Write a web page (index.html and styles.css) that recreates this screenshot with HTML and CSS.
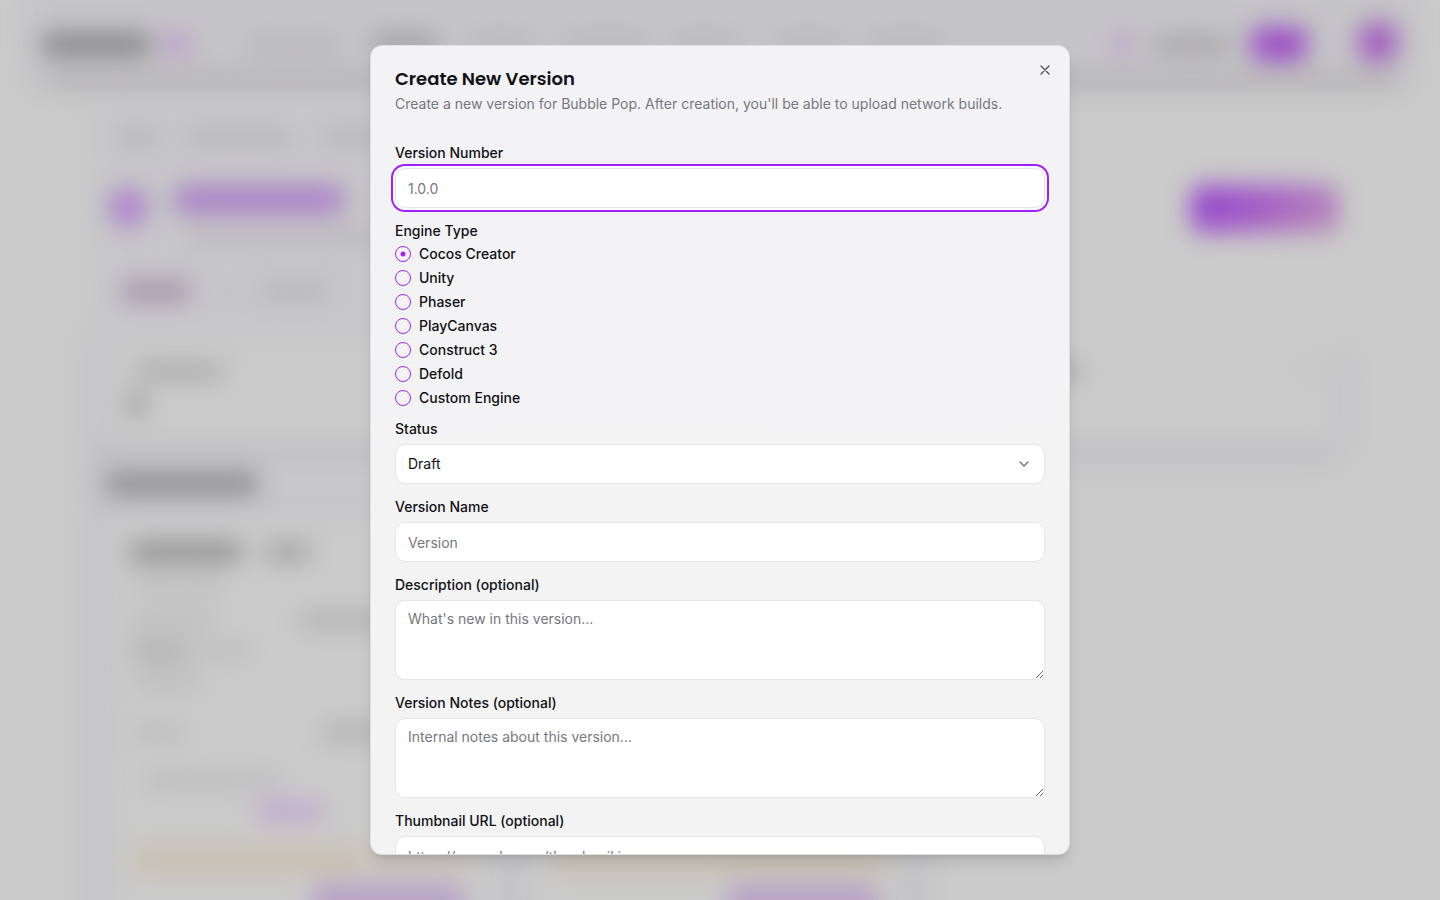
FILE: index.html
```html
<!DOCTYPE html>
<html lang="en">
<head>
<meta charset="utf-8">
<meta name="viewport" content="width=device-width, initial-scale=1">
<title>Create New Version</title>
<link rel="stylesheet" href="styles.css">
</head>
<body>
<svg class="backdrop" viewBox="0 0 1440 900" preserveAspectRatio="xMidYMid slice" aria-hidden="true">
  <defs>
    <linearGradient id="action" x1="0" x2="1" y1="0" y2="0.3">
      <stop offset="0" stop-color="#9440cc"/>
      <stop offset="0.55" stop-color="#a35fc6"/>
      <stop offset="1" stop-color="#b483bb"/>
    </linearGradient>
  </defs>
  <rect width="1440" height="900" fill="#cbcbcb"/>
  <!-- large surfaces -->
  <g class="haze haze-wide">
    <rect x="20" y="-30" width="1400" height="120" rx="20" fill="#c5c4c7"/>
    <rect x="90" y="100" width="350" height="240" fill="#c7c6c9"/>
    <rect x="85" y="335" width="20" height="600" fill="#c3c2c6"/>
    <rect x="95" y="445" width="1240" height="18" fill="#bdbbc0"/>
    <rect x="1338" y="350" width="14" height="100" fill="#c2c0c5"/>
    <rect x="100" y="490" width="320" height="25" fill="#c4c2c7"/>
    <rect x="500" y="840" width="20" height="90" fill="#c0bec4"/>
    <rect x="905" y="850" width="20" height="80" fill="#c0bec4"/>
  </g>
  <!-- header and page details -->
  <g class="haze">
    <rect x="44" y="74" width="1354" height="12" rx="6" fill="#aeacae"/>
    <rect x="42" y="33" width="108" height="23" rx="8" fill="#868688"/>
    <rect x="158" y="34" width="36" height="21" rx="8" fill="#bda0ce"/>
    <g fill="#b4b2b5">
      <rect x="248" y="38" width="90" height="14"/>
      <rect x="372" y="36" width="65" height="14" fill="#969496"/>
      <rect x="470" y="36" width="64" height="12"/>
      <rect x="562" y="36" width="86" height="12"/>
      <rect x="672" y="36" width="66" height="12"/>
      <rect x="775" y="36" width="66" height="12"/>
      <rect x="868" y="36" width="76" height="12"/>
      <rect x="118" y="130" width="40" height="13"/>
      <rect x="186" y="130" width="104" height="13"/>
      <rect x="322" y="130" width="60" height="13"/>
      <rect x="190" y="231" width="190" height="10"/>
      <rect x="262" y="284" width="66" height="14"/>
      <rect x="226" y="286" width="8" height="8"/>
    </g>
    <circle cx="1123" cy="44" r="10" fill="#b997ce"/>
    <rect x="1154" y="37" width="76" height="16" fill="#a3a1a3"/>
    <rect x="1251" y="27" width="56" height="34" rx="10" fill="#9a4fc5"/>
    <circle cx="1378" cy="42" r="21" fill="#a25fbe"/>
    <circle cx="128" cy="207" r="20" fill="#ae85cb"/>
    <rect x="175" y="185" width="168" height="29" rx="6" fill="#ab83c7"/>
    <rect x="122" y="281" width="68" height="20" rx="6" fill="#a392ab"/>
    <rect x="1191" y="185" width="148" height="48" rx="12" fill="url(#action)"/>
    <rect x="136" y="364" width="86" height="15" fill="#a7a6a7"/>
    <rect x="129" y="394" width="16" height="20" fill="#929192"/>
    <rect x="1040" y="364" width="40" height="15" fill="#a3a2a4"/>
    <rect x="1300" y="364" width="10" height="10" fill="#bbb9bd"/>
  </g>
  <!-- recent version cards -->
  <g class="haze">
    <rect x="106" y="472" width="152" height="23" rx="5" fill="#8d8d90"/>
    <rect x="130" y="542" width="112" height="20" rx="5" fill="#8f8f91"/>
    <rect x="266" y="543" width="44" height="18" rx="5" fill="#a09fa2"/>
    <g fill="#b9b8bb">
      <rect x="134" y="578" width="88" height="12"/>
      <rect x="132" y="613" width="82" height="14"/>
      <rect x="132" y="643" width="50" height="16" fill="#acabad"/>
      <rect x="182" y="645" width="70" height="12"/>
      <rect x="134" y="674" width="66" height="14"/>
      <rect x="300" y="614" width="90" height="14" fill="#adabae"/>
      <rect x="134" y="726" width="50" height="13"/>
      <rect x="322" y="726" width="70" height="14" fill="#adabae"/>
      <rect x="146" y="774" width="134" height="14"/>
    </g>
    <rect x="256" y="801" width="68" height="20" rx="6" fill="#bfa9cd"/>
    <rect x="132" y="845" width="228" height="29" rx="7" fill="#c9bfb0"/>
    <rect x="360" y="850" width="110" height="22" fill="#cac3b9"/>
    <rect x="552" y="850" width="336" height="25" rx="7" fill="#c9c0b1"/>
    <rect x="312" y="884" width="152" height="40" rx="8" fill="#b8a2c7"/>
    <rect x="726" y="884" width="152" height="40" rx="8" fill="#b8a2c7"/>
  </g>
</svg>

<div class="overlay">
  <section class="dialog" role="dialog" aria-modal="true" aria-labelledby="dialog-title" aria-describedby="dialog-text">
    <header class="dialog-header">
      <h2 class="dialog-title" id="dialog-title">Create New Version</h2>
      <p class="dialog-text" id="dialog-text">Create a new version for Bubble Pop. After creation, you'll be able to upload network builds.</p>
    </header>
    <button class="close" type="button" aria-label="Close">
      <svg class="icon" viewBox="0 0 24 24" aria-hidden="true"><path d="M18 6 6 18M6 6l12 12"/></svg>
    </button>

    <form class="form">
      <div class="field">
        <label class="label" for="number">Version Number</label>
        <input class="control control-active" id="number" type="text" placeholder="1.0.0">
      </div>

      <fieldset class="field engines">
        <legend class="label">Engine Type</legend>
        <label class="option"><input class="radio" type="radio" name="engine" checked>Cocos Creator</label>
        <label class="option"><input class="radio" type="radio" name="engine">Unity</label>
        <label class="option"><input class="radio" type="radio" name="engine">Phaser</label>
        <label class="option"><input class="radio" type="radio" name="engine">PlayCanvas</label>
        <label class="option"><input class="radio" type="radio" name="engine">Construct 3</label>
        <label class="option"><input class="radio" type="radio" name="engine">Defold</label>
        <label class="option"><input class="radio" type="radio" name="engine">Custom Engine</label>
      </fieldset>

      <div class="field">
        <label class="label" for="status">Status</label>
        <div class="select-wrap">
          <select class="control select" id="status"><option>Draft</option></select>
          <svg class="icon chevron" viewBox="0 0 24 24" aria-hidden="true"><path d="m6 9 6 6 6-6"/></svg>
        </div>
      </div>

      <div class="field">
        <label class="label" for="name">Version Name</label>
        <input class="control" id="name" type="text" placeholder="Version">
      </div>

      <div class="field">
        <label class="label" for="description">Description (optional)</label>
        <textarea class="control textarea" id="description" placeholder="What's new in this version..."></textarea>
      </div>

      <div class="field">
        <label class="label" for="notes">Version Notes (optional)</label>
        <textarea class="control textarea" id="notes" placeholder="Internal notes about this version..."></textarea>
      </div>

      <div class="field">
        <label class="label" for="thumbnail">Thumbnail URL (optional)</label>
        <input class="control" id="thumbnail" type="url" placeholder="https://example.com/thumbnail.jpg">
      </div>
    </form>
  </section>
</div>
</body>
</html>
```
FILE: styles.css
```css
:root {
  --accent: #a020ff;
  --text: #111116;
  --muted: #777780;
  --border: #e3e3e8;
}

*, *::before, *::after { box-sizing: border-box; }

body {
  margin: 0;
  min-height: 100vh;
  overflow: hidden;
  background: #cbcbcb;
  color: var(--text);
  font-family: Inter, "Liberation Sans", sans-serif;
  font-size: 14px;
  line-height: 20px;
}

.backdrop {
  position: fixed;
  inset: 0;
  width: 100%;
  height: 100%;
}

.haze { filter: blur(12px); }
.haze-wide { filter: blur(14px); }

.overlay {
  position: fixed;
  inset: 0;
  display: grid;
  place-items: center;
}

.dialog {
  position: relative;
  width: 100%;
  max-width: 700px;
  max-height: 90vh;
  padding: 24px;
  overflow-y: auto;
  scrollbar-width: none;
  border: 1px solid #dfdfe2;
  border-radius: 12px;
  background: linear-gradient(#f3f3f6, #f3f3f3);
  box-shadow: 0 10px 15px -3px rgb(0 0 0 / 0.12), 0 4px 6px -4px rgb(0 0 0 / 0.12);
}

.dialog-header {
  display: flex;
  flex-direction: column;
  gap: 6px;
  margin-bottom: 32px;
}

.dialog-title {
  margin: 0;
  font-family: Poppins, Inter, "Liberation Sans", sans-serif;
  font-size: 18px;
  font-weight: 600;
  line-height: 18px;
}

.dialog-text {
  margin: 0;
  color: var(--muted);
}

.close {
  position: absolute;
  top: 16px;
  right: 16px;
  display: flex;
  padding: 0;
  border: 0;
  background: none;
  color: var(--text);
  opacity: 0.7;
  cursor: pointer;
}

.icon {
  width: 16px;
  height: 16px;
  fill: none;
  stroke: currentColor;
  stroke-width: 2;
  stroke-linecap: round;
  stroke-linejoin: round;
}

.form {
  display: flex;
  flex-direction: column;
  gap: 16px;
}

.field {
  display: flex;
  flex-direction: column;
  gap: 8px;
}

.label, .option {
  font-weight: 500;
  line-height: 14px;
}

.engines {
  min-width: 0;
  margin: 0;
  padding: 0;
  border: 0;
}

.engines .label {
  margin-bottom: 8px;
  padding: 0;
}

.option {
  display: flex;
  align-items: center;
  gap: 8px;
}

.radio {
  appearance: none;
  width: 16px;
  height: 16px;
  margin: 0;
  border: 1px solid var(--accent);
  border-radius: 50%;
}

.radio:checked {
  background: radial-gradient(circle, var(--accent) 2px, transparent 3px);
}

.control {
  width: 100%;
  height: 40px;
  padding: 8px 12px;
  border: 1px solid var(--border);
  border-radius: 10px;
  outline: none;
  background: #fff;
  color: var(--text);
  font: inherit;
}

.control::placeholder {
  color: var(--muted);
  opacity: 1;
}

.control-active,
.control:focus-visible {
  box-shadow: 0 0 0 2px #fff, 0 0 0 4px var(--accent);
}

.textarea {
  display: block;
  height: 80px;
  resize: vertical;
}

.select-wrap { position: relative; }

.select {
  display: block;
  appearance: none;
}

.chevron {
  position: absolute;
  top: 12px;
  right: 13px;
  opacity: 0.6;
  pointer-events: none;
}
```
